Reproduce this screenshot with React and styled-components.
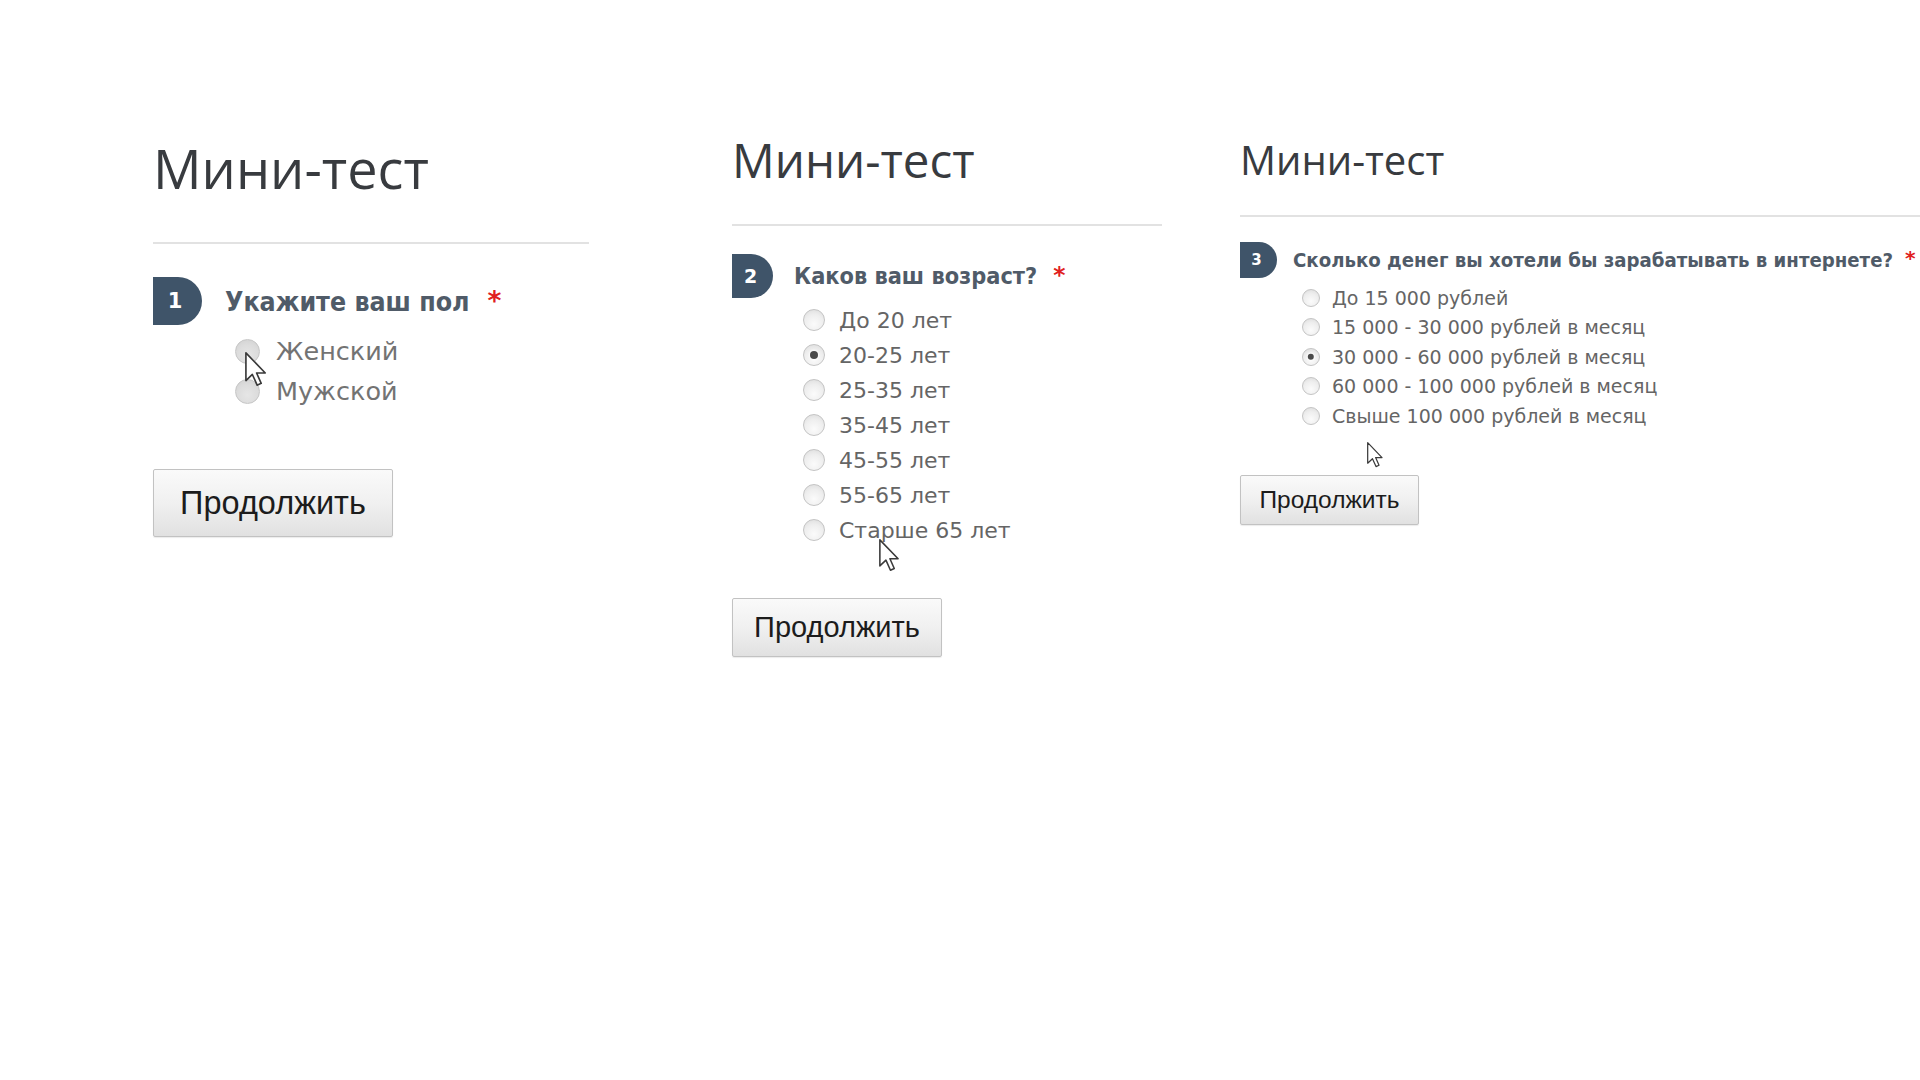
import React from "react";
import styled, { createGlobalStyle } from "styled-components";

const Global = createGlobalStyle`
  html, body { margin: 0; padding: 0; background: #ffffff; }
  body { width: 1920px; height: 1080px; overflow: hidden; }
`;

const Page = styled.div`
  display: grid;
  grid-template-columns: 579px 508px 1fr;
  padding-left: 153px;
  height: 1080px;
  box-sizing: border-box;
`;

const Panel = styled.section`
  position: relative;
  padding-top: ${(p) => p.$top}px;
`;

const Title = styled.h1`
  margin: 0;
  font-family: "Open Sans", "DejaVu Sans", sans-serif;
  font-weight: 400;
  font-size: ${(p) => p.$size}px;
  line-height: ${(p) => p.$size}px;
  color: #383b3f;
`;

const Rule = styled.div`
  margin-top: ${(p) => p.$gap}px;
  width: ${(p) => p.$w};
  height: 2px;
  background: #e2e2e2;
`;

const QuestionRow = styled.div`
  display: flex;
  align-items: center;
  margin-top: ${(p) => p.$gap}px;
`;

const Badge = styled.div`
  flex: none;
  width: ${(p) => p.$w}px;
  height: ${(p) => p.$h}px;
  border-radius: 0 ${(p) => p.$h / 2}px ${(p) => p.$h / 2}px 0;
  background: #3f5469;
  color: #ffffff;
  display: flex;
  align-items: center;
  justify-content: center;
  padding-right: ${(p) => Math.round(p.$w * 0.1)}px;
  box-sizing: border-box;
  font-family: "DejaVu Sans", sans-serif;
  font-weight: bold;
  font-size: ${(p) => p.$fs}px;
`;

const QuestionText = styled.span`
  margin-left: ${(p) => p.$gap}px;
  font-family: "DejaVu Sans Condensed", "DejaVu Sans", sans-serif;
  font-stretch: condensed;
  font-weight: bold;
  font-size: ${(p) => p.$fs}px;
  color: #505b68;
  white-space: nowrap;
`;

const Star = styled.span`
  margin-left: ${(p) => p.$gap}px;
  align-self: flex-start;
  margin-top: ${(p) => p.$off}px;
  font-family: "DejaVu Sans", sans-serif;
  font-weight: bold;
  font-size: ${(p) => p.$fs}px;
  color: #e02020;
`;

const OptionList = styled.ul`
  list-style: none;
  margin: ${(p) => p.$top}px 0 0 0;
  padding: 0 0 0 ${(p) => p.$indent}px;
`;

const Option = styled.li`
  display: flex;
  align-items: center;
  height: ${(p) => p.$h}px;
  font-family: "DejaVu Sans", sans-serif;
  font-size: ${(p) => p.$fs}px;
  color: ${(p) => (p.$faded ? "#737373" : "#656565")};
  white-space: nowrap;
`;

const Radio = styled.span`
  flex: none;
  position: relative;
  width: ${(p) => p.$d}px;
  height: ${(p) => p.$d}px;
  border-radius: 50%;
  box-sizing: border-box;
  border: 1px solid ${(p) => (p.$faded ? "#c6c6c6" : "#c4c4c4")};
  background: ${(p) =>
    p.$faded
      ? "radial-gradient(circle at 50% 65%, #e6e6e6 0%, #dcdcdc 55%, #cfcfcf 100%)"
      : "radial-gradient(circle at 50% 70%, #fbfbfb 0%, #eeeeee 55%, #d9d9d9 100%)"};
  margin-right: ${(p) => p.$gap}px;

  &::after {
    content: "";
    display: ${(p) => (p.$checked ? "block" : "none")};
    position: absolute;
    left: 50%;
    top: 50%;
    width: 40%;
    height: 40%;
    transform: translate(-50%, -50%);
    border-radius: 50%;
    background: #4a4a4a;
    box-shadow: 0 0 2px 1px rgba(255, 255, 255, 0.8);
  }
`;

const Button = styled.button`
  display: block;
  margin-top: ${(p) => p.$top}px;
  width: ${(p) => p.$w}px;
  height: ${(p) => p.$h}px;
  padding: 0;
  border: 1px solid #c2c2c2;
  border-radius: 2px;
  background: linear-gradient(to bottom, #fafafa 0%, #f0f0f0 50%, #e1e1e1 100%);
  box-shadow: 0 1px 1px rgba(0, 0, 0, 0.08);
  font-family: "Liberation Sans", Arial, sans-serif;
  font-size: ${(p) => p.$fs}px;
  color: #1c1c1c;
  cursor: default;
`;

const Cursor = styled.svg`
  position: absolute;
  left: ${(p) => p.$x}px;
  top: ${(p) => p.$y}px;
  overflow: visible;
`;

const panels = [
  {
    top: 141, titleSize: 54, titleGap: 47, lineW: "436px",
    badgeW: 49, badgeH: 48, badgeFs: 21,
    qTop: 33, qGap: 23, qFs: 26.5, starGap: 18, starOff: 8,
    indent: 82, radio: 25, optGap: 16, optFs: 25.5, rowH: 40, listTop: 6,
    btnTop: 58, btnW: 240, btnH: 68, btnFs: 32.5,
    faded: true, checked: -1,
    question: "Укажите ваш пол",
    options: ["Женский", "Мужской"],
    cursor: { x: 92, y: 352, h: 35 },
  },
  {
    top: 136, titleSize: 47.5, titleGap: 40, lineW: "430px",
    badgeW: 41, badgeH: 44, badgeFs: 19,
    qTop: 28, qGap: 21, qFs: 23.3, starGap: 16, starOff: 7,
    indent: 71, radio: 22, optGap: 14, optFs: 22, rowH: 35, listTop: 5,
    btnTop: 50, btnW: 210, btnH: 59, btnFs: 29,
    faded: false, checked: 1,
    question: "Каков ваш возраст?",
    options: ["До 20 лет", "20-25 лет", "25-35 лет", "35-45 лет", "45-55 лет", "55-65 лет", "Старше 65 лет"],
    cursor: { x: 147, y: 539, h: 33 },
  },
  {
    top: 140, titleSize: 40, titleGap: 35, lineW: "100%",
    badgeW: 37, badgeH: 36, badgeFs: 15,
    qTop: 25, qGap: 16, qFs: 20.2, starGap: 12, starOff: 4,
    indent: 62, radio: 18, optGap: 12, optFs: 19, rowH: 29.5, listTop: 5,
    btnTop: 44, btnW: 179, btnH: 50, btnFs: 24.5,
    faded: false, checked: 2,
    question: "Сколько денег вы хотели бы зарабатывать в интернете?",
    options: [
      "До 15 000 рублей",
      "15 000 - 30 000 рублей в месяц",
      "30 000 - 60 000 рублей в месяц",
      "60 000 - 100 000 рублей в месяц",
      "Свыше 100 000 рублей в месяц",
    ],
    cursor: { x: 127, y: 442, h: 26 },
  },
];

function Arrow({ x, y, h }) {
  const w = (h * 12) / 19;
  return (
    <Cursor $x={x} $y={y} width={w} height={h} viewBox="0 0 12 19">
      <path
        d="M0.5 0.5 L0.5 15.5 L4 12.2 L6.6 18 L8.8 17 L6.3 11.4 L11 11.4 Z"
        fill="#ffffff"
        stroke="#3a3a3a"
        strokeWidth="0.9"
        strokeLinejoin="round"
      />
    </Cursor>
  );
}

function QuizPanel({ cfg, index }) {
  return (
    <Panel $top={cfg.top}>
      <Title $size={cfg.titleSize}>Мини-тест</Title>
      <Rule $gap={cfg.titleGap} $w={cfg.lineW} />
      <QuestionRow $gap={cfg.qTop}>
        <Badge $w={cfg.badgeW} $h={cfg.badgeH} $fs={cfg.badgeFs}>{index + 1}</Badge>
        <QuestionText $gap={cfg.qGap} $fs={cfg.qFs}>{cfg.question}</QuestionText>
        <Star $gap={cfg.starGap} $fs={cfg.qFs} $off={cfg.starOff}>*</Star>
      </QuestionRow>
      <OptionList $top={cfg.listTop} $indent={cfg.indent}>
        {cfg.options.map((o, i) => (
          <Option key={o} $h={cfg.rowH} $fs={cfg.optFs} $faded={cfg.faded}>
            <Radio $d={cfg.radio} $gap={cfg.optGap} $checked={i === cfg.checked} $faded={cfg.faded} />
            {o}
          </Option>
        ))}
      </OptionList>
      <Button $top={cfg.btnTop} $w={cfg.btnW} $h={cfg.btnH} $fs={cfg.btnFs}>
        Продолжить
      </Button>
      <Arrow {...cfg.cursor} />
    </Panel>
  );
}

export default function App() {
  return (
    <>
      <Global />
      <Page>
        {panels.map((p, i) => (
          <QuizPanel key={i} cfg={p} index={i} />
        ))}
      </Page>
    </>
  );
}
